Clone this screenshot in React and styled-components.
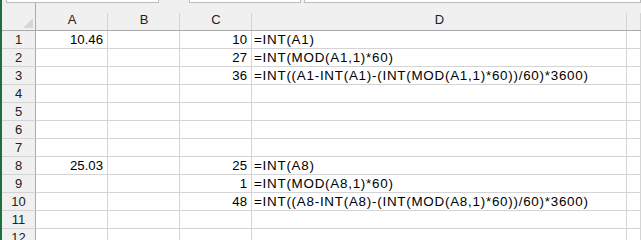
import React from "react";
import styled, { createGlobalStyle } from "styled-components";

const GlobalStyle = createGlobalStyle`
  html, body {
    margin: 0;
    padding: 0;
    background: #f0f0f0;
    overflow: hidden;
  }
`;

const Frame = styled.div`
  display: flex;
  width: 641px;
  height: 240px;
  overflow: hidden;
  font-family: "Liberation Sans", Arial, sans-serif;
  color: #000;
`;

const GreenEdge = styled.div`
  width: 2px;
  flex-shrink: 0;
  background: #1e6f3e;
`;

const Main = styled.div`
  flex: 1;
  display: flex;
  flex-direction: column;
  min-width: 0;
`;

const TopStrip = styled.div`
  display: flex;
  height: 3px;
  flex-shrink: 0;
  background: #f0f0f0;
`;

const Field = styled.div`
  margin-left: ${(p) => p.gap}px;
  width: ${(p) => (p.width ? `${p.width}px` : "auto")};
  flex: ${(p) => (p.width ? "none" : 1)};
  height: 2px;
  background: #fff;
  border: 1px solid #bcbcbc;
  border-top: 0;
`;

const Sheet = styled.div`
  display: grid;
  grid-template-columns: 34px 72px 72px 72px 375px 1fr;
  grid-template-rows: 28px;
  grid-auto-rows: 18px;
`;

const Corner = styled.div`
  position: relative;
  background: #f0f0f0;
  border-right: 1px solid #ababab;
  border-bottom: 1px solid #ababab;
  &::after {
    content: "";
    position: absolute;
    right: 2px;
    bottom: 2px;
    width: 0;
    height: 0;
    border-left: 10px solid transparent;
    border-bottom: 10px solid #d7d7d7;
  }
`;

const ColHead = styled.div`
  position: relative;
  display: flex;
  align-items: flex-end;
  justify-content: center;
  padding-bottom: 4px;
  background: #f0f0f0;
  border-bottom: 1px solid #ababab;
  font-size: 13px;
  line-height: 1;
  color: #222;
  &::after {
    content: "";
    position: absolute;
    right: 0;
    top: 10px;
    bottom: 0;
    width: 1px;
    background: #d4d4d4;
  }
`;

const RowHead = styled.div`
  display: flex;
  align-items: flex-end;
  justify-content: center;
  background: #f0f0f0;
  border-right: 1px solid #ababab;
  border-bottom: 1px solid #d4d4d4;
  font-size: 13px;
  line-height: 1;
  padding-bottom: 2px;
  color: #222;
`;

const Cell = styled.div`
  display: flex;
  align-items: flex-end;
  justify-content: ${(p) => (p.align === "right" ? "flex-end" : "flex-start")};
  padding: 0 ${(p) => (p.align === "right" ? "4px" : "0")} 2px
    ${(p) => (p.align === "right" ? "0" : "2px")};
  background: #fff;
  border-right: 1px solid #d4d4d4;
  border-bottom: 1px solid #d4d4d4;
  font-size: ${(p) => (p.formula ? "13.4px" : "13.2px")};
  letter-spacing: ${(p) => (p.formula ? "0.75px" : "0")};
  line-height: 1;
  white-space: nowrap;
  overflow: visible;
`;

const columns = ["A", "B", "C", "D", ""];

const data = {
  1: { A: "10.46", C: "10", D: "=INT(A1)" },
  2: { C: "27", D: "=INT(MOD(A1,1)*60)" },
  3: { C: "36", D: "=INT((A1-INT(A1)-(INT(MOD(A1,1)*60))/60)*3600)" },
  8: { A: "25.03", C: "25", D: "=INT(A8)" },
  9: { C: "1", D: "=INT(MOD(A8,1)*60)" },
  10: { C: "48", D: "=INT((A8-INT(A8)-(INT(MOD(A8,1)*60))/60)*3600)" },
};

const rows = Array.from({ length: 12 }, (_, i) => i + 1);

export default function App() {
  return (
    <>
      <GlobalStyle />
      <Frame>
        <GreenEdge />
        <Main>
          <TopStrip>
            <Field gap={4} width={151} />
            <Field gap={30} width={110} />
            <Field gap={3} />
          </TopStrip>
          <Sheet>
            <Corner />
            {columns.map((c, i) => (
              <ColHead key={i}>{c}</ColHead>
            ))}
            {rows.map((r) => (
              <React.Fragment key={r}>
                <RowHead>{r}</RowHead>
                {columns.map((c, i) => {
                  const v = data[r] && c ? data[r][c] : "";
                  const isFormula = c === "D";
                  return (
                    <Cell
                      key={i}
                      align={isFormula ? "left" : "right"}
                      formula={isFormula}
                    >
                      {v}
                    </Cell>
                  );
                })}
              </React.Fragment>
            ))}
          </Sheet>
        </Main>
      </Frame>
    </>
  );
}
